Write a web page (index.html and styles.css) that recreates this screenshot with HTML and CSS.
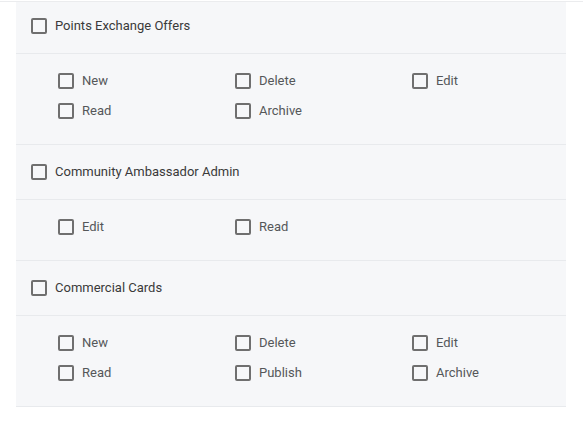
FILE: index.html
```html
<!DOCTYPE html>
<html>
<head>
<meta charset="utf-8">
<link rel="stylesheet" href="styles.css">
</head>
<body>
<div class="page">
  <div class="panel">
    <div class="group-head first"><span class="cb"></span><span class="head-label">Points Exchange Offers</span></div>
    <div class="perms">
      <div class="perm"><span class="cb"></span><span class="perm-label">New</span></div>
      <div class="perm"><span class="cb"></span><span class="perm-label">Delete</span></div>
      <div class="perm"><span class="cb"></span><span class="perm-label">Edit</span></div>
      <div class="perm"><span class="cb"></span><span class="perm-label">Read</span></div>
      <div class="perm"><span class="cb"></span><span class="perm-label">Archive</span></div>
    </div>
    <div class="group-head"><span class="cb"></span><span class="head-label">Community Ambassador Admin</span></div>
    <div class="perms">
      <div class="perm"><span class="cb"></span><span class="perm-label">Edit</span></div>
      <div class="perm"><span class="cb"></span><span class="perm-label">Read</span></div>
    </div>
    <div class="group-head"><span class="cb"></span><span class="head-label">Commercial Cards</span></div>
    <div class="perms last">
      <div class="perm"><span class="cb"></span><span class="perm-label">New</span></div>
      <div class="perm"><span class="cb"></span><span class="perm-label">Delete</span></div>
      <div class="perm"><span class="cb"></span><span class="perm-label">Edit</span></div>
      <div class="perm"><span class="cb"></span><span class="perm-label">Read</span></div>
      <div class="perm"><span class="cb"></span><span class="perm-label">Publish</span></div>
      <div class="perm"><span class="cb"></span><span class="perm-label">Archive</span></div>
    </div>
  </div>
</div>
</body>
</html>
```
FILE: styles.css
```css
html, body {
  margin: 0;
  padding: 0;
  background: #ffffff;
}
body {
  font-family: Roboto, "Liberation Sans", sans-serif;
  font-size: 13px;
}
.page {
  padding-top: 1px;
}
.page::before {
  content: "";
  display: block;
  height: 1px;
  background: #ebecee;
}
.panel {
  margin-left: 16px;
  width: 550px;
  background: #f6f7f9;
}
.group-head {
  display: flex;
  align-items: center;
  gap: 8px;
  padding: 19px 15px 19px;
  border-bottom: 1px solid #e8eaed;
}
.group-head.first {
  padding-top: 16px;
  padding-bottom: 19px;
}
.head-label {
  color: #3a3a3a;
  line-height: 16px;
}
.cb {
  display: block;
  flex: none;
  width: 16px;
  height: 16px;
  box-sizing: border-box;
  border: 2px solid #6f6f6f;
  border-radius: 2px;
  background: transparent;
}
.perms {
  display: grid;
  grid-template-columns: 177px 177px 177px;
  row-gap: 14px;
  padding: 19px 0 25px 42px;
  border-bottom: 1px solid #e8eaed;
}
.perm {
  display: flex;
  align-items: center;
  gap: 8px;
}
.perm-label {
  color: #555759;
  line-height: 16px;
}
```
